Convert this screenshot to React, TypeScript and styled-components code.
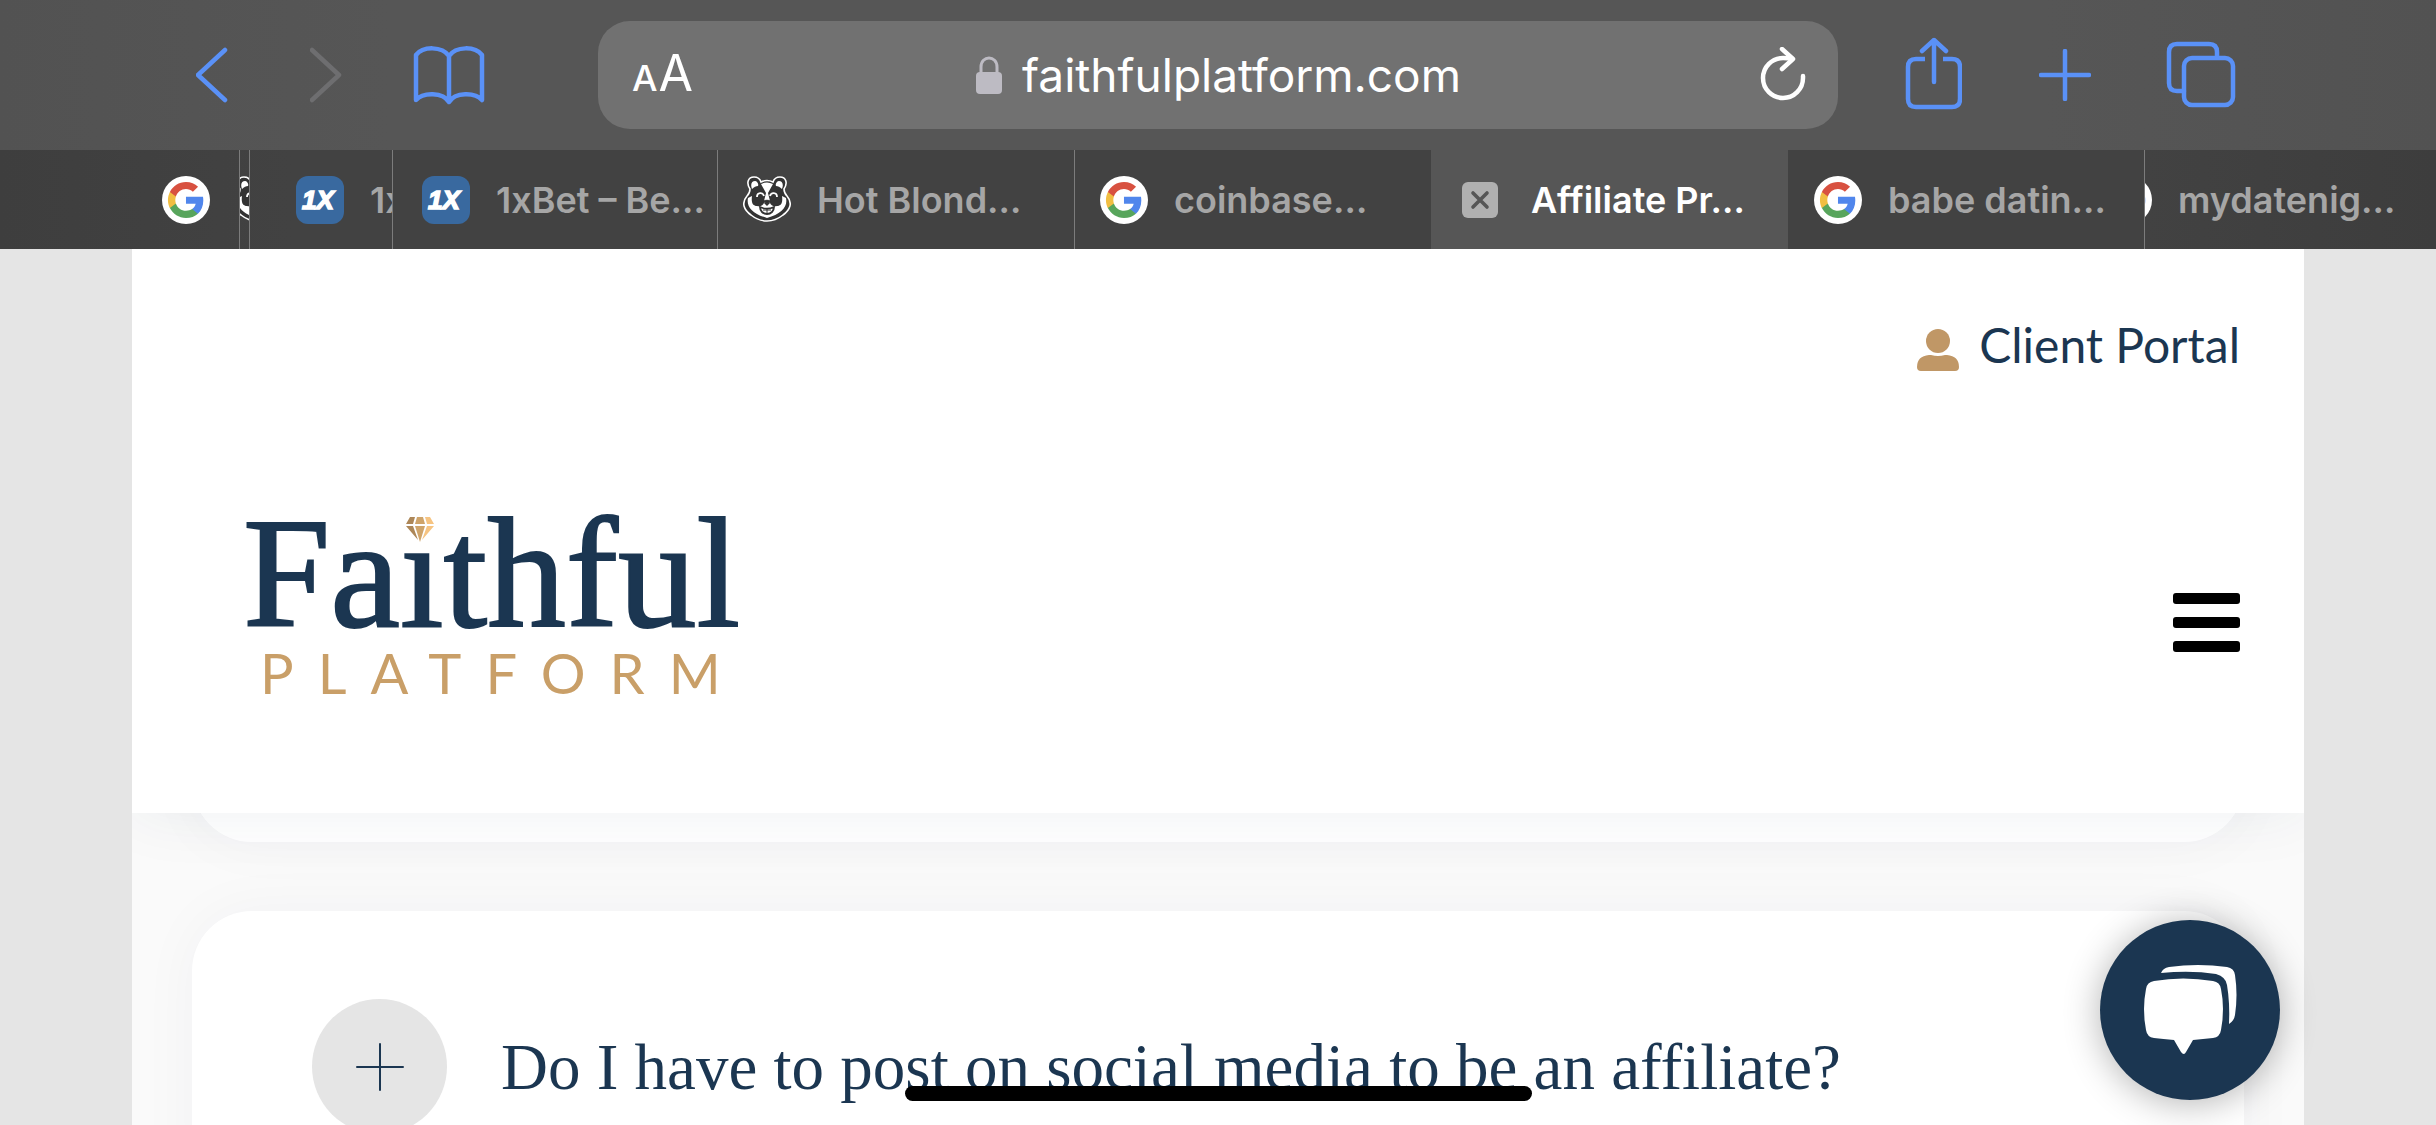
import React from "react";
import styled, { createGlobalStyle } from "styled-components";

const navy = "#1b3651";
const gold = "#c99f68";
const accent = "#5a91f7";

const GlobalStyle = createGlobalStyle`
  *, *::before, *::after { box-sizing: border-box; }
  body { margin: 0; background: #e5e5e5; }
  button { border: 0; padding: 0; background: none; color: inherit; font: inherit; cursor: pointer; }
  svg { display: block; flex: none; }
`;

const Screen = styled.div`
  display: flex;
  flex-direction: column;
  height: 100vh;
  overflow: hidden;
  font-family: Inter, "Liberation Sans", sans-serif;
`;

const Toolbar = styled.header`
  display: grid;
  grid-template-columns: 598px minmax(0, 1fr) 598px;
  align-items: center;
  flex: none;
  height: 150px;
  background: linear-gradient(90deg, #525252, #565656 16%, #565656 84%, #525252);
`;

const ToolGroup = styled.div<{ $start: number }>`
  display: flex;
  align-items: center;
  padding-left: ${(p) => p.$start}px;
`;

const ToolButton = styled.button<{ $after?: number }>`
  margin-right: ${(p) => p.$after ?? 0}px;
  color: ${accent};
  &:disabled { color: #6e6e70; }
`;

const AddressBar = styled.div`
  display: grid;
  grid-template-columns: 104px minmax(0, 1fr) 100px;
  align-items: center;
  height: 108px;
  border-radius: 32px;
  background: #717171;
  color: #fff;
`;

const TextSize = styled.button`
  display: flex;
  align-items: baseline;
  gap: 1px;
  padding-left: 34px;
  font-size: 50px;
  line-height: 60px;
`;

const SmallLetter = styled.span`
  font-size: 36px;
  font-weight: 500;
`;

const Location = styled.label`
  display: flex;
  align-items: center;
  justify-content: center;
  gap: 20px;
`;

const LocationInput = styled.input`
  width: 442px;
  height: 64px;
  padding: 0;
  border: 0;
  outline: 0;
  background: none;
  color: #fff;
  font: 400 46px/64px Inter, "Liberation Sans", sans-serif;
`;

const ReloadButton = styled.button`
  justify-self: end;
  margin-right: 32px;
`;

const TabStrip = styled.nav`
  display: grid;
  grid-template-columns:
    239px 10px 143px minmax(0, 325fr) minmax(0, 357fr) minmax(0, 357fr)
    minmax(0, 357fr) minmax(0, 356fr) minmax(0, 292fr);
  flex: none;
  height: 99px;
  background: linear-gradient(90deg, #3e3e3e, #424242 12%, #424242 88%, #3d3d3d);
`;

const Tab = styled.div<{ $active?: boolean; $divider?: boolean; $start: number; $gap?: number }>`
  display: flex;
  align-items: center;
  gap: ${(p) => p.$gap ?? 26}px;
  overflow: hidden;
  padding-left: ${(p) => p.$start}px;
  border-left: ${(p) => (p.$divider ? "1px solid #7c7c7c" : "0")};
  background: ${(p) => (p.$active ? "#565656" : "transparent")};
  color: ${(p) => (p.$active ? "#fff" : "#a6a6a6")};
`;

const TabTitle = styled.a`
  min-width: 0;
  overflow: hidden;
  color: inherit;
  font-size: 36px;
  font-weight: 600;
  line-height: 44px;
  text-decoration: none;
  white-space: nowrap;
`;

const ClippedIcon = styled.span<{ $hidden: number }>`
  flex: none;
  margin-left: -${(p) => p.$hidden}px;
`;

const Page = styled.main`
  display: flex;
  flex-direction: column;
  flex: 1;
  min-height: 0;
  margin: 0 132px;
  overflow: hidden;
  background: #fafafa;
`;

const SiteHeader = styled.header`
  position: relative;
  z-index: 1;
  flex: none;
  padding: 64px 64px 70px 111px;
  background: #fff;
  box-shadow: 0 0 60px rgba(27, 54, 81, 0.07);
`;

const PortalLink = styled.a`
  display: flex;
  align-items: flex-end;
  justify-content: flex-end;
  gap: 20px;
  color: ${navy};
  font: 400 48px/64px Lato, sans-serif;
  text-decoration: none;
`;

const BrandRow = styled.div`
  display: flex;
  align-items: center;
  justify-content: space-between;
  padding-top: 124px;
`;

const Brand = styled.a`
  position: relative;
  display: flex;
  flex-direction: column;
  height: 242px;
  color: ${navy};
  text-decoration: none;
`;

const BrandName = styled.span`
  font: 400 157px/144px "Liberation Serif", serif;
  -webkit-text-stroke: 2px ${navy};
`;

const BrandTag = styled.span`
  padding-left: 17px;
  color: ${gold};
  font: 400 56px/56px Lato, sans-serif;
  letter-spacing: 24px;
`;

const Gem = styled.svg`
  position: absolute;
  top: 10px;
  left: 158px;
  background: #fff;
`;

const MenuButton = styled.button`
  display: grid;
  gap: 13px;
  width: 67px;
`;

const MenuBar = styled.span`
  height: 11px;
  border-radius: 3px;
  background: #000;
`;

const Faq = styled.section`
  display: flex;
  flex-direction: column;
  gap: 69px;
  padding: 0 60px;
`;

const Card = styled.article<{ $scrolled?: boolean }>`
  flex: none;
  min-height: 200px;
  margin-top: ${(p) => (p.$scrolled ? "-171px" : "0")};
  padding: 88px 120px;
  border-radius: 60px;
  background: #fff;
  box-shadow: 0 0 60px rgba(27, 54, 81, 0.04);
`;

const Question = styled.button`
  display: flex;
  align-items: center;
  gap: 54px;
  color: ${navy};
  font: 400 65px/80px "Liberation Serif", serif;
  text-align: left;
`;

const Expand = styled.span`
  display: grid;
  place-items: center;
  flex: none;
  width: 135px;
  height: 135px;
  border-radius: 50%;
  background: #e5e5e5;
`;

const ChatButton = styled.button`
  position: fixed;
  z-index: 3;
  right: 156px;
  bottom: 25px;
  width: 180px;
  height: 180px;
  border-radius: 50%;
  background: ${navy};
  box-shadow: 0 3px 36px rgba(0, 0, 0, 0.3);
`;

const HomeIndicator = styled.div`
  position: fixed;
  z-index: 4;
  bottom: 24px;
  left: 50%;
  width: 627px;
  height: 15px;
  margin-left: -313px;
  border-radius: 8px;
  background: #000;
`;

const Stroke = ({ w, h, width = 4.5, children }: { w: number; h: number; width?: number; children: React.ReactNode }) => (
  <svg width={w} height={h} viewBox={`0 0 ${w} ${h}`} fill="none" stroke="currentColor" strokeWidth={width} strokeLinecap="round" strokeLinejoin="round" aria-hidden="true">
    {children}
  </svg>
);

const GoogleIcon = () => (
  <svg width="48" height="48" viewBox="0 0 48 48" aria-hidden="true">
    <circle cx="24" cy="24" r="24" fill="#fff" />
    <g transform="translate(4.3 4.3) scale(1.64)">
      <path fill="#5086ec" d="M22.56 12.25c0-.78-.07-1.53-.2-2.25H12v4.26h5.92c-.26 1.37-1.04 2.53-2.21 3.31v2.77h3.57c2.08-1.92 3.28-4.74 3.28-8.09z" />
      <path fill="#58a55c" d="M12 23c2.97 0 5.46-.98 7.28-2.66l-3.57-2.77c-.98.66-2.23 1.06-3.71 1.06-2.86 0-5.29-1.93-6.16-4.53H2.18v2.84C3.99 20.53 7.7 23 12 23z" />
      <path fill="#f1be42" d="M5.84 14.09c-.22-.66-.35-1.36-.35-2.09s.13-1.43.35-2.09V7.07H2.18C1.43 8.55 1 10.22 1 12s.43 3.45 1.18 4.93l2.85-2.22.81-.62z" />
      <path fill="#d85140" d="M12 5.38c1.62 0 3.06.56 4.21 1.64l3.15-3.15C17.45 2.09 14.97 1 12 1 7.7 1 3.99 3.47 2.18 7.07l3.66 2.84c.87-2.6 3.3-4.53 6.16-4.53z" />
    </g>
  </svg>
);

const BetIcon = () => (
  <svg width="48" height="48" viewBox="0 0 48 48" aria-hidden="true">
    <rect width="48" height="48" rx="12" fill="#39699f" />
    <text x="22" y="33" textAnchor="middle" fill="#fff" stroke="#fff" strokeWidth="1.6" fontFamily="Liberation Sans, sans-serif" fontWeight="700" fontStyle="italic" fontSize="26">1X</text>
  </svg>
);

const BearIcon = () => (
  <svg width="48" height="48" viewBox="0 0 48 48" aria-hidden="true">
    <path d="M7 13C3 7 5 1 11 1c4 0 6 2 7 5 4-2 8-2 12 0 1-3 3-5 7-5 6 0 8 6 4 12 0 3 1 5 3 7 6 7 3 14-4 19-5 4-10 6-16 6s-11-2-16-6C1 34-2 27 4 20c2-2 3-4 3-7z" fill="#333" stroke="#fff" strokeWidth="1.6" />
    <path d="M9 13c-2-5 0-8 3-8 2 0 4 3 3 5-2 0-4 1-6 3zM39 13c2-5 0-8-3-8-2 0-4 3-3 5 2 0 4 1 6 3z" fill="#fff" />
    <path d="M18 8c4-2 8-2 12 0l-5 9 2 8c0 3-6 3-6 0l2-8z" fill="#fff" />
    <path d="M5 22c-2 9 5 16 19 20 14-4 21-11 19-20l-4-2c1 7-1 10-5 10-4 1-6-1-7-3l-3 3-3-3c-1 2-3 4-7 3-4 0-6-3-5-10z" fill="#fff" />
    <path d="M14 21c0-5 6-5 7-1M27 20c1-4 7-4 7 1" fill="none" stroke="#fff" strokeWidth="1.8" />
    <path d="M17 31c4 2 10 2 14 0 0 4-3 7-7 7s-7-3-7-7z" fill="#fff" stroke="#333" strokeWidth="1.8" />
    <path d="M21 25c1-1 5-1 6 0-1 3-5 3-6 0zM20 34h8M24 33v4" fill="#333" stroke="#333" strokeWidth="1" />
  </svg>
);

const LockIcon = () => (
  <svg width="26" height="38" viewBox="0 0 26 38" aria-hidden="true">
    <path d="M5 18V11C5 -1 21 -1 21 11V18" fill="none" stroke="#bdbbc3" strokeWidth="3" />
    <rect y="16" width="26" height="22" rx="4" fill="#bdbbc3" />
  </svg>
);

const UserIcon = () => (
  <svg width="42" height="48" viewBox="0 0 42 48" fill="#c09766" aria-hidden="true">
    <circle cx="21" cy="12" r="12" />
    <path d="M12 26h2q7 2 14 0h2q12 1 12 12 0 4-4 4H4q-4 0-4-4Q0 27 12 26z" />
  </svg>
);

export default function App() {
  return (
    <Screen>
      <GlobalStyle />
      <Toolbar>
        <ToolGroup $start={196}>
          <ToolButton aria-label="Back" $after={82}>
            <Stroke w={32} h={56}><path d="M29 3 2 28l27 25" /></Stroke>
          </ToolButton>
          <ToolButton aria-label="Forward" disabled $after={71}>
            <Stroke w={32} h={56}><path d="m2 3 27 25L2 53" /></Stroke>
          </ToolButton>
          <ToolButton aria-label="Bookmarks">
            <Stroke w={72} h={60}>
              <path d="M36 57V11C29 1 10 1 3 10v45c7-8 27-8 33 2 6-10 26-10 33-2V10C62 1 43 1 36 11" />
            </Stroke>
          </ToolButton>
        </ToolGroup>
        <AddressBar>
          <TextSize aria-label="Text size"><SmallLetter>A</SmallLetter>A</TextSize>
          <Location>
            <LockIcon />
            <LocationInput aria-label="Address" defaultValue="faithfulplatform.com" />
          </Location>
          <ReloadButton aria-label="Reload">
            <Stroke w={46} h={56}>
              <path d="M32 11.5Q28 11 23 11a20 20 0 1 0 20 20v-2" />
              <path d="m22 2 11 10-11 10" />
            </Stroke>
          </ReloadButton>
        </AddressBar>
        <ToolGroup $start={67}>
          <ToolButton aria-label="Share" $after={77}>
            <Stroke w={57} h={76}>
              <path strokeLinecap="butt" d="M20 22h-9q-8 0-8 8v32q0 8 8 8h36q8 0 8-8V30q0-8-8-8h-9" />
              <path d="M29 45V3M17 14 29 3l12 11" />
            </Stroke>
          </ToolButton>
          <ToolButton aria-label="New tab" $after={75}>
            <Stroke w={52} h={52}><path d="M26 2v48M2 26h48" /></Stroke>
          </ToolButton>
          <ToolButton aria-label="Show tabs">
            <Stroke w={70} h={68}>
              <path d="M51 16v-5q0-8-8-8H11q-8 0-8 8v31q0 8 8 8h7" />
              <rect x="18" y="17" width="49" height="47" rx="8" />
            </Stroke>
          </ToolButton>
        </ToolGroup>
      </Toolbar>

      <TabStrip aria-label="Open tabs">
        <Tab $start={162}><GoogleIcon /></Tab>
        <Tab $start={0} $divider><ClippedIcon $hidden={7}><BearIcon /></ClippedIcon></Tab>
        <Tab $start={46} $divider><BetIcon /><TabTitle href="#">1x</TabTitle></Tab>
        <Tab $start={29} $divider><BetIcon /><TabTitle href="#">1xBet – Be…</TabTitle></Tab>
        <Tab $start={25} $divider><BearIcon /><TabTitle href="#">Hot Blond…</TabTitle></Tab>
        <Tab $start={25} $divider><GoogleIcon /><TabTitle href="#">coinbase…</TabTitle></Tab>
        <Tab $start={31} $gap={33} $active>
          <button aria-label="Close tab">
            <svg width="36" height="36" viewBox="0 0 36 36" aria-hidden="true">
              <rect width="36" height="36" rx="6" fill="#b0b0b0" />
              <path d="m11 11 14 14M25 11 11 25" stroke="#565656" strokeWidth="3.6" strokeLinecap="round" />
            </svg>
          </button>
          <TabTitle href="#">Affiliate Pr…</TabTitle>
        </Tab>
        <Tab $start={26}><GoogleIcon /><TabTitle href="#">babe datin…</TabTitle></Tab>
        <Tab $start={0} $divider><ClippedIcon $hidden={41}><GoogleIcon /></ClippedIcon><TabTitle href="#">mydatenig…</TabTitle></Tab>
      </TabStrip>

      <Page>
        <SiteHeader>
          <PortalLink href="#"><UserIcon />Client Portal</PortalLink>
          <BrandRow>
            <Brand href="#">
              <BrandName>Faithful</BrandName>
              <BrandTag>PLATFORM</BrandTag>
              <Gem width="38" height="34" viewBox="-3 -5 38 34" aria-hidden="true">
                <path fill="#ad8758" d="M6 1h5L9 8H2zM2 10h7l5 14z" />
                <path fill="#cfa46a" d="M13 1h6l2 7H11zM11 10h10l-5 16z" />
                <path fill="#f6c482" d="M21 1h5l4 7h-7zM23 10h7L18 24z" />
              </Gem>
            </Brand>
            <MenuButton aria-label="Menu"><MenuBar /><MenuBar /><MenuBar /></MenuButton>
          </BrandRow>
        </SiteHeader>
        <Faq>
          <Card $scrolled />
          <Card>
            <Question aria-expanded="false">
              <Expand><Stroke w={48} h={48} width={2}><path d="M24 1v46M1 24h46" /></Stroke></Expand>
              Do I have to post on social media to be an affiliate?
            </Question>
          </Card>
        </Faq>
      </Page>

      <ChatButton aria-label="Open chat">
        <svg width="180" height="180" viewBox="0 0 180 180" fill="#fff" aria-hidden="true">
          <path d="M54 61q29-5 59 0 7 1 8 8 4 20 0 41-1 7-8 8-10 1-20 2l-7 12q-2 4-5 0l-7-12q-11-1-20-2-7-1-8-8-4-21 0-41 1-7 8-8z" />
          <path d="M61 53q2-5 8-6 29-4 58 0 7 1 8 8 3 20 0 40-1 6-6 9 1-21-2-39-1-8-11-11-25-4-55-1z" />
        </svg>
      </ChatButton>
      <HomeIndicator />
    </Screen>
  );
}
